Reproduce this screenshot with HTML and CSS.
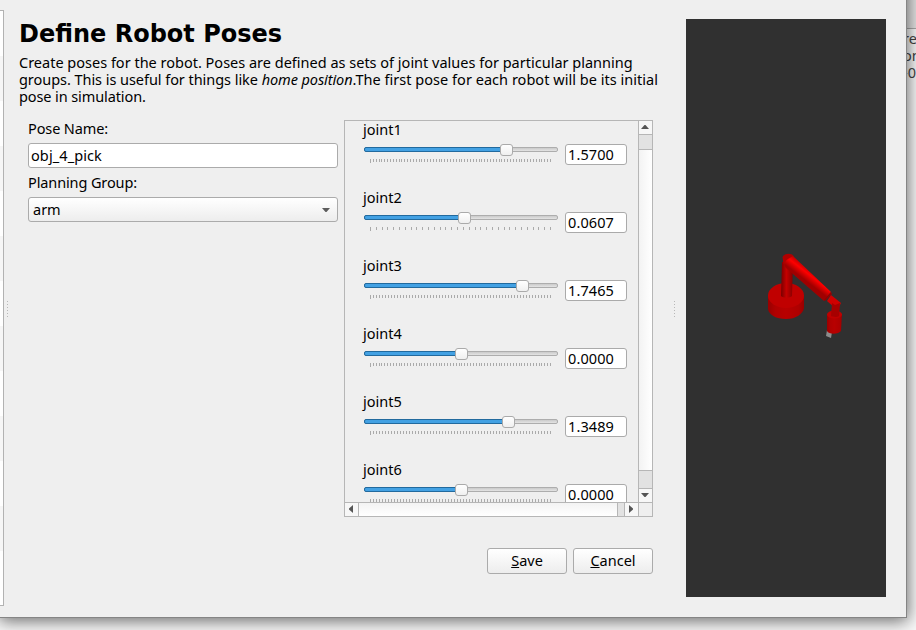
FILE: index.html
```html
<!DOCTYPE html>
<html lang="en">
<head>
<meta charset="utf-8">
<title>Define Robot Poses</title>
<link rel="stylesheet" href="styles.css">
</head>
<body>
<div class="backdrop"><div class="backdrop-bar"></div><p>re<br>om<br>-0</p></div>
<main class="window">
  <aside class="steps"><i></i><i></i><i></i><i></i><i></i><i></i><i></i><i></i><i></i><i></i><i></i><i></i><i></i></aside>
  <div class="grip grip-left"></div>
  <section class="editor">
    <h1>Define Robot Poses</h1>
    <p class="intro"><span class="l1">Create poses for the robot. Poses are defined as sets of joint values for particular planning</span><span class="l2"><b>groups. This is useful for things like </b><em>home position</em>.The first pose for each robot will be its initial</span><span class="l3">pose in simulation.</span></p>
    <div class="columns">
      <form class="fields">
        <label>Pose Name:</label>
        <div class="input">obj_4_pick</div>
        <label>Planning Group:</label>
        <div class="select"><span>arm</span><svg width="8" height="5"><path d="M0 0h8L4.5 4h-1z" fill="#5c5c5c"/></svg></div>
      </form>
      <div class="scroll">
        <div class="viewport" id="joints"></div>
        <div class="vbar"><b><svg width="8" height="5"><path d="M0 4h8L4.5 0h-1z"/></svg></b><div class="vthumb"></div><b><svg width="8" height="5"><path d="M0 0h8L4.5 4h-1z"/></svg></b></div>
        <div class="hbar"><b><svg width="5" height="8"><path d="M4 0v8L0 4.5v-1z"/></svg></b><div class="hthumb"></div><b><svg width="5" height="8"><path d="M0 0v8l4-3.500v-1z"/></svg></b></div>
        <div class="corner"></div>
      </div>
    </div>
    <div class="actions"><button><u>S</u>ave</button><button><u>C</u>ancel</button></div>
  </section>
  <div class="grip grip-right"></div>
  <section class="viewer">
    <svg width="200" height="578" viewBox="686 19 200 578">
      <defs>
        <linearGradient id="base"><stop offset="0" stop-color="#980000"/><stop offset=".2" stop-color="#b00000"/><stop offset=".5" stop-color="#b80000"/><stop offset=".85" stop-color="#ae0000"/><stop offset="1" stop-color="#980000"/></linearGradient>
        <linearGradient id="post"><stop offset="0" stop-color="#780000"/><stop offset=".45" stop-color="#c40000"/><stop offset="1" stop-color="#850000"/></linearGradient>
        <linearGradient id="link" gradientUnits="userSpaceOnUse" x1="812" y1="271" x2="805" y2="280"><stop offset="0" stop-color="#c00000"/><stop offset=".4" stop-color="#ff0000"/><stop offset="1" stop-color="#a00000"/></linearGradient>
      </defs>
      <path d="M768 295v14c1 6 8 10 18 10s17-5 18-11v-13z" fill="url(#base)"/>
      <ellipse cx="786" cy="295.500" rx="18" ry="12.500" fill="#c00000"/>
      <path d="M782 262l11 1-1 33c-2 2-9 2-11 0z" fill="url(#post)"/>
      <path d="M782.500 257c2-4 9-4 11-1v7l-10 1z" fill="#b00000"/>
      <path d="M788 259l5-3 38 36-7 9-38-33c-3-3-1-7 2-9z" fill="url(#link)"/>
      <path d="M824 300l7-8 1 2-7 7z" fill="#940000"/>
      <path d="M827 301l4-6 10 8-2 4-4 1z" fill="#d00000"/>
      <path d="M827 330l5 2-1 6-5-2z" fill="#8c8c8c"/>
      <path d="M827 314v17c2 4 12 3 14 0l1-17z" fill="url(#base)"/>
      <ellipse cx="834.500" cy="314.500" rx="7.500" ry="4" fill="#c00000"/>
      <path d="M832 303l3 2 5-2-1 13c-2 1.500-6 1-8 0z" fill="#a60000"/>
    </svg>
  </section>
</main>
<script src="joints.js"></script>
</body>
</html>
```
FILE: joints.js
```javascript
const joints = [
  ["joint1", "1.5700", 142.5, 2.857],
  ["joint2", "0.0607", 100.5, 5.806],
  ["joint3", "1.7465", 158.5, 3],
  ["joint4", "0.0000", 97.5, 2.857],
  ["joint5", "1.3489", 144.5, 3],
  ["joint6", "0.0000", 97.5, 3]
];
document.getElementById("joints").innerHTML = joints.map(([name, value, at, step]) => {
  let ticks = "";
  for (let i = 0, x = 0; x < 181; i++, x = i * step)
    ticks += `<rect x="${Math.round(x)}" y="0" width="1" height="${i ? 3 : 4}"/>`;
  return `<div class="joint"><label>${name}</label><div class="control">
    <div class="slider"><div class="groove"><div class="fill" style="width:${at}px"></div><div class="knob"></div></div>
    <svg class="ticks" width="182" height="4">${ticks}</svg></div>
    <div class="value">${value}</div></div></div>`;
}).join("");
```
FILE: styles.css
```css
* { box-sizing: border-box; }
body { margin: 0; width: 916px; height: 630px; position: relative; overflow: hidden; background: #f4f4f4; font: 14.500px/17px "Noto Sans", sans-serif; color: #000; }
h1, p { margin: 0; }
.backdrop { height: 630px; background: #f8f8f8; }
.backdrop-bar { height: 29px; background: #e4e4e4; border-bottom: 1px solid #aaa; }
.backdrop p { margin: 1px 0 0 903px; color: #444; white-space: nowrap; }
.window { position: absolute; left: 0; top: -20px; width: 907px; height: 638px; padding-top: 20px; background: #efefef; border-right: 1px solid #858585; border-bottom: 1px solid #858585; box-shadow: 0 2px 16px 1px rgba(0,0,0,.58); display: flex; align-items: flex-start; }
.steps { width: 4px; height: 596px; margin-top: 10px; border: solid #b2b2b2; border-width: 1px 1px 1px 0; overflow: hidden; background: #fff; }
.steps i { display: block; height: 45px; background: #fff; }
.steps i:nth-child(even) { background: #f6f6f6; }
.grip { width: 1px; height: 17px; margin-top: 301px; background: repeating-linear-gradient(#b8b8b8 0 1px, transparent 1px 3px); }
.grip-left { margin-left: 3px; }
.editor { width: 642px; margin-left: 11px; padding-top: 20px; }
h1 { font: bold 24px/28px "DejaVu Sans", sans-serif; white-space: nowrap; }
.intro { margin-top: 6px; }
.intro span { display: block; white-space: nowrap; }
.l2 { letter-spacing: .03px; }
.l2 b { font-weight: normal; letter-spacing: -.05px; }
.l3 { letter-spacing: -.1px; }
.intro em { letter-spacing: -.08px; }
.columns { display: flex; margin-top: 15px; }
.fields { width: 310px; margin: 0 6px 0 9px; display: flex; flex-direction: column; }
.fields label { height: 17px; letter-spacing: -.12px; }
.input, .select { height: 25px; border: 1px solid #ababab; border-radius: 3px; background: #fff; padding: 3px 2px; }
.input { margin: 6px 0 6px; letter-spacing: .1px; }
.select { margin-top: 6px; padding: 3px 7px 4px 4px; background: linear-gradient(#fff, #ededed); display: flex; justify-content: space-between; }
.select svg { margin-top: 7px; }
.scroll { width: 309px; height: 397px; border: 1px solid #b6b6b6; display: grid; grid-template: 381px 14px / 293px 14px; }
.viewport { overflow: hidden; }
.joint { height: 68px; padding-left: 18px; }
.joint label { display: block; height: 17px; }
.control { display: flex; }
.slider { width: 195px; padding: 9px 0 0 1px; }
.groove { height: 5px; width: 194px; border: 1px solid #adadad; border-radius: 2px; background: linear-gradient(#cacaca, #e4e4e4); display: flex; align-items: center; }
.fill { flex: none; height: 5px; margin-left: -1px; border: 1px solid #226a9e; border-radius: 2px 0 0 2px; background: #43a1e3; }
.knob { flex: none; width: 13px; height: 12px; margin-left: -7px; border: 1px solid #aaa; border-radius: 3px; background: linear-gradient(#fff, #f0f0f0); }
.ticks { display: block; margin: 7px 0 0 6px; fill: #aaa; }
.value { width: 62px; height: 21px; margin: 6px 0 0 7px; padding: 1px 2px; border: 1px solid #aaa; border-radius: 3px; background: #fff; letter-spacing: .1px; }
.vbar, .hbar { display: flex; background: #e2e2e2; }
.vbar { flex-direction: column; border-left: 1px solid #b6b6b6; }
.vbar b, .hbar b { width: 13px; height: 13px; display: flex; align-items: center; justify-content: center; background: #f7f7f7; }
.vbar b { padding-right: 1px; }
.vbar svg, .hbar svg { flex: none; fill: #555; }
.vbar b:first-child { border-bottom: 1px solid #b6b6b6; height: 14px; }
.vbar b:last-child { border-top: 1px solid #b6b6b6; height: 14px; }
.vthumb { margin: 14px 0 17px; flex: 1; border: solid #b6b6b6; border-width: 1px 0; background: linear-gradient(90deg, #f3f3f3, #fff); }
.hbar { border-top: 1px solid #b6b6b6; }
.hbar b { padding-bottom: 1px; }
.hbar b:first-child { border-right: 1px solid #b6b6b6; width: 14px; }
.hbar b:last-child { border-left: 1px solid #b6b6b6; width: 14px; }
.hthumb { flex: 1; margin-right: 6px; border-right: 1px solid #b6b6b6; background: linear-gradient(#f3f3f3, #fff); }
.corner { border: solid #b6b6b6; border-width: 1px 0 0 1px; }
.actions { display: flex; justify-content: flex-end; gap: 6px; margin: 31px 8px 0 0; }
button { height: 26px; width: 80px; padding: 0 0 2px; font: inherit; color: #000; border: 1px solid #ababab; border-radius: 3px; background: linear-gradient(#fff, #ededed); }
.grip-right { margin-left: 13px; }
.viewer { width: 200px; height: 578px; margin: 19px 0 0 11px; background: #303030; }
.viewer svg { display: block; }
```
